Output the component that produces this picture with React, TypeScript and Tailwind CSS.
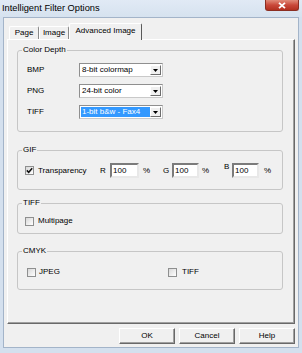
import { type ReactNode } from "react";

const Checkbox = ({ checked = false }: { checked?: boolean }) => (
  <span className="flex h-[9px] w-[9px] shrink-0 items-center justify-center border border-[#8e8f8f] bg-gradient-to-br from-[#d8d8d8] to-white">
    {checked && (
      <svg width="7" height="7" viewBox="0 0 7 7">
        <path d="M0.8 3.4 L2.7 5.3 L6.2 1.2" fill="none" stroke="#111" strokeWidth="1.5" />
      </svg>
    )}
  </span>
);

const Combo = ({ value, selected = false }: { value: string; selected?: boolean }) => (
  <div className="flex h-[14px] w-[84px] items-stretch border border-[#8f8f8f] border-r-[#c9c9c9] border-b-[#c9c9c9] bg-white p-px">
    <span
      className={`flex flex-1 items-center pl-[1px] leading-[10px] ${
        selected ? "bg-[#3399ff] text-white" : ""
      }`}
    >
      {value}
    </span>
    <span className="flex w-[11px] items-center justify-center border border-white border-r-[#6d6d6d] border-b-[#6d6d6d] bg-[#f0f0f0]">
      <svg width="5" height="3" viewBox="0 0 5 3">
        <path d="M0 0 H5 L2.5 3 Z" fill="#000" />
      </svg>
    </span>
  </div>
);

const NumberBox = ({ className = "" }: { className?: string }) => (
  <div
    className={`flex h-[15px] items-center border-2 border-t-[#7b7b7b] border-l-[#7b7b7b] border-r-[#e8e8e8] border-b-[#e8e8e8] bg-white pl-[1px] leading-[10px] ${className}`}
  >
    100
  </div>
);

const Group = ({ title, className = "", children }: { title: string; className?: string; children: ReactNode }) => (
  <fieldset className={`w-[266px] rounded-[3px] border border-[#c6c6c6] ${className}`}>
    <legend className="ml-[4px] px-[1px] leading-[10px]">{title}</legend>
    {children}
  </fieldset>
);

const Button = ({ label }: { label: string }) => (
  <button className="flex h-[16px] w-[56px] items-center justify-center border border-white border-r-[#696969] border-b-[#696969] bg-[#f0f0f0] leading-[10px] shadow-[inset_-1px_-1px_0_#a0a0a0]">
    {label}
  </button>
);

const App = () => {
  return (
    <div className="flex h-[353px] w-[302px] flex-col overflow-hidden bg-[#d4e0ee] font-['Liberation_Sans',Arial,sans-serif] text-[8px] text-black">
      <div className="flex h-[17px] items-start justify-between bg-gradient-to-b from-[#e1eaf5] to-[#d6e2ef] pl-[2px] pr-[3px]">
        <span className="mt-[2px] text-[9.3px] leading-[12px]">Intelligent Filter Options</span>
        <span className="flex h-[11px] w-[34px] items-center justify-center rounded-b-[3px] border border-t-0 border-[#8b2e22] bg-gradient-to-b from-[#e08a79] via-[#c9483a] to-[#b3301f]">
          <svg width="8" height="7" viewBox="0 0 8 7">
            <path d="M1 0.8 L7 6.2 M7 0.8 L1 6.2" stroke="#fff" strokeWidth="1.8" />
          </svg>
        </span>
      </div>

      <div className="mx-[3px] flex h-[331px] flex-col border border-[#a3b4c9] bg-[#f0f0f0] px-[3px] pb-[3px]">
        <div className="mt-[5px] flex h-[16px] items-end pl-[2px]">
          <div className="flex h-[13px] w-[30px] items-center justify-center rounded-t-[2px] border border-b-0 border-white border-r-[#8a8a8a]">
            Page
          </div>
          <div className="flex h-[13px] w-[30px] items-center justify-center rounded-t-[2px] border border-b-0 border-white border-r-[#8a8a8a]">
            Image
          </div>
          <div className="relative z-10 -mb-px flex h-[17px] w-[73px] items-center justify-center rounded-t-[2px] border border-b-0 border-white border-r-[#5a5a5a] bg-[#f0f0f0] pb-[2px]">
            Advanced Image
          </div>
        </div>

        <div className="flex h-[285px] flex-col border border-white border-r-[#696969] border-b-[#696969] pl-[9px] pt-[5px] shadow-[inset_-1px_-1px_0_#a0a0a0]">
          <Group title="Color Depth">
            <div className="flex flex-col gap-[7px] pb-[12px] pl-[9px] pt-[8px]">
              {[
                { label: "BMP", value: "8-bit colormap" },
                { label: "PNG", value: "24-bit color" },
                { label: "TIFF", value: "1-bit b&w - Fax4", selected: true },
              ].map(({ label, value, selected }) => (
                <div className="flex items-center" key={label}>
                  <span className="w-[52px] leading-[10px]">{label}</span>
                  <Combo value={value} selected={selected} />
                </div>
              ))}
            </div>
          </Group>

          <Group title="GIF" className="mt-[13px]">
            <div className="flex h-[15px] items-center pl-[7px] leading-[10px] mt-[8px] mb-[11px]">
              <Checkbox checked />
              <span className="ml-[4px] w-[62px]">Transparency</span>
              <span className="w-[10px]">R</span>
              <NumberBox className="w-[29px]" />
              <span className="ml-[4px] w-[20px]">%</span>
              <span className="w-[9px]">G</span>
              <NumberBox className="w-[27px]" />
              <span className="ml-[3px] w-[22px]">%</span>
              <span className="w-[8px] self-start -mt-[1px]">B</span>
              <NumberBox className="w-[27px]" />
              <span className="ml-[5px]">%</span>
            </div>
          </Group>

          <Group title="TIFF" className="mt-[8px]">
            <div className="flex h-[10px] items-center pl-[7px] leading-[10px] mt-[8px] mb-[7px]">
              <Checkbox />
              <span className="ml-[4px]">Multipage</span>
            </div>
          </Group>

          <Group title="CMYK" className="mt-[12px]">
            <div className="flex h-[10px] items-center pl-[9px] leading-[10px] mt-[11px] mb-[12px]">
              <div className="flex w-[141px] items-center">
                <Checkbox />
                <span className="ml-[3px]">JPEG</span>
              </div>
              <Checkbox />
              <span className="ml-[5px]">TIFF</span>
            </div>
          </Group>
        </div>

        <div className="mt-[4px] flex justify-end gap-[4px]">
          <Button label="OK" />
          <Button label="Cancel" />
          <Button label="Help" />
        </div>
      </div>
    </div>
  );
};

export default App;
